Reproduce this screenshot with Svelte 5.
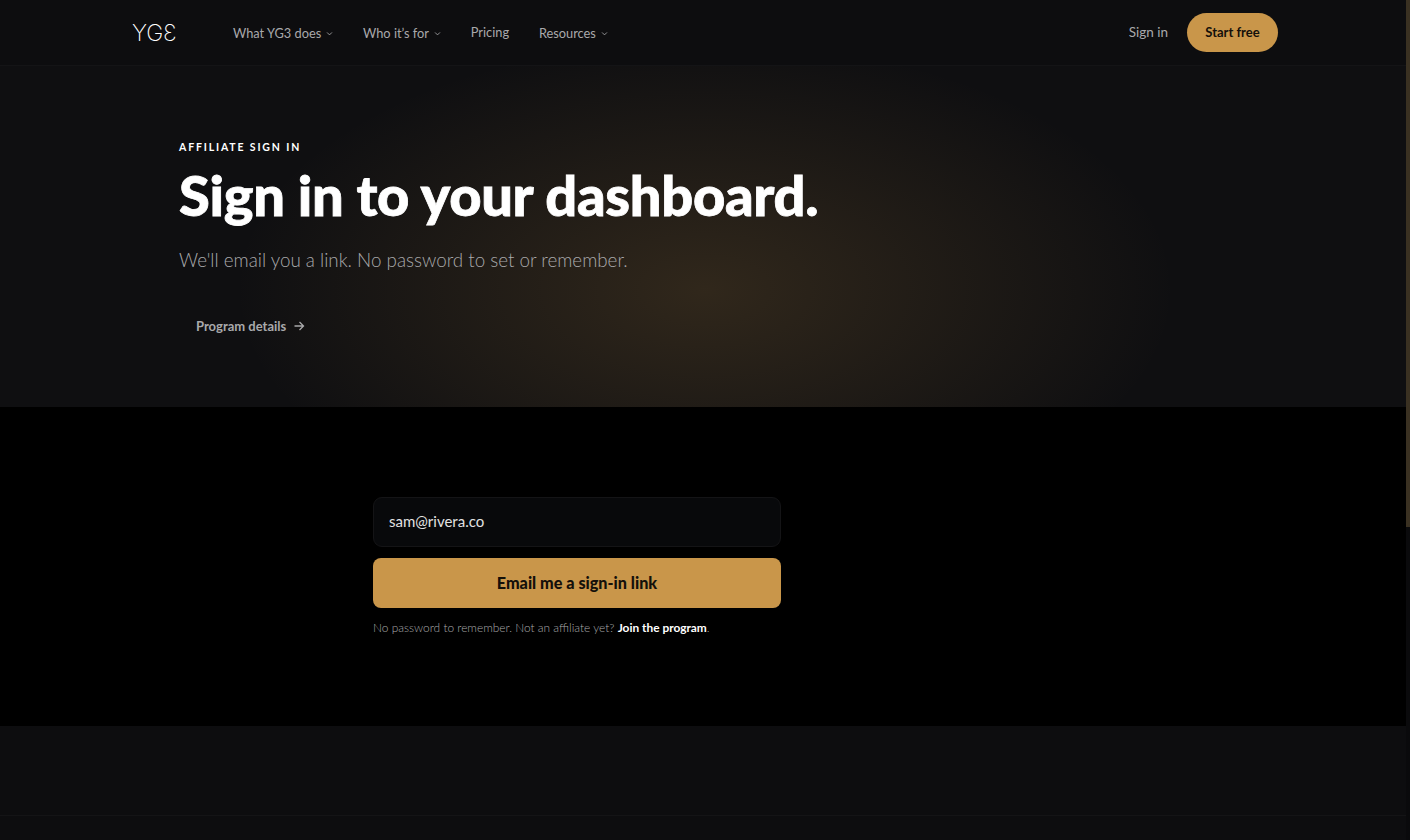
<script lang="ts">
	const navItems = [
		{ label: 'What YG3 does', menu: true },
		{ label: 'Who it’s for', menu: true },
		{ label: 'Pricing', menu: false },
		{ label: 'Resources', menu: true }
	];

	let email = $state('sam@rivera.co');
</script>

<div class="page">
	<header class="topbar">
		<div class="topbar-inner">
			<a class="logo" href="#home" aria-label="YG3 home">YG<span class="mirror">3</span></a>
			<nav class="links">
				{#each navItems as item}
					<a href="#nav" class:plain={!item.menu}>
						{item.label}
						{#if item.menu}
							<svg viewBox="0 0 10 10" width="7" height="7" aria-hidden="true">
								<path d="M1.5 3.5 5 7l3.5-3.5" />
							</svg>
						{/if}
					</a>
				{/each}
			</nav>
			<div class="actions">
				<a class="signin" href="#signin">Sign in</a>
				<a class="start" href="#start">Start free</a>
			</div>
		</div>
	</header>

	<section class="hero">
		<div class="hero-inner">
			<p class="eyebrow">AFFILIATE SIGN IN</p>
			<h1>Sign in to your dashboard.</h1>
			<p class="lede">We'll email you a link. No password to set or remember.</p>
			<a class="details" href="#program">
				Program details
				<svg viewBox="0 0 12 12" width="12" height="12" aria-hidden="true">
					<path d="M1.5 6h9M6.5 2l4 4-4 4" />
				</svg>
			</a>
		</div>
	</section>

	<main class="content">
		<form class="signin-form" onsubmit={(e) => e.preventDefault()}>
			<input type="email" bind:value={email} aria-label="Email" />
			<button type="submit">Email me a sign-in link</button>
			<p class="note">No password to remember. Not an affiliate yet? <a href="#join">Join the program</a>.</p>
		</form>
	</main>

	<footer class="footer">
		<div class="footer-rule"></div>
	</footer>

	<div class="scroll-track"><div class="scroll-thumb"></div></div>
</div>

<style>
	:global(body) {
		margin: 0;
		background: #000;
	}

	.page {
		position: relative;
		height: 840px;
		overflow: hidden;
		font-family: Lato, 'Liberation Sans', sans-serif;
		color: #fff;
		background: #000;
	}

	a {
		color: inherit;
		text-decoration: none;
	}

	.topbar {
		height: 65px;
		background: #0d0d0f;
		border-bottom: 1px solid #141416;
	}

	.topbar-inner {
		width: 1146px;
		height: 100%;
		margin: 0 auto;
		display: flex;
		align-items: center;
	}

	.logo {
		width: 101px;
		font-family: Inter, sans-serif;
		font-size: 23px;
		font-weight: 200;
		color: #fff;
	}

	.mirror {
		display: inline-block;
		transform: scaleX(-1);
	}

	.links {
		display: flex;
		align-items: center;
		gap: 29.8px;
		font-size: 12.8px;
		color: #a9a9ab;
	}

	.links a {
		display: flex;
		align-items: center;
		gap: 5px;
	}

	.links a.plain {
		margin-top: -2px;
	}

	.links svg {
		margin-top: 2px;
	}

	.links path {
		fill: none;
		stroke: currentColor;
		stroke-width: 1.2;
	}

	.actions {
		margin-left: auto;
		display: flex;
		align-items: center;
		gap: 19px;
	}

	.signin {
		padding-bottom: 2px;
		font-size: 13.5px;
		color: #a9a9ab;
	}

	.start {
		box-sizing: border-box;
		display: flex;
		align-items: center;
		justify-content: center;
		width: 91px;
		height: 39px;
		padding-bottom: 2px;
		border-radius: 20px;
		background: #c9964a;
		color: #14100a;
		font-size: 13px;
		font-weight: 700;
	}

	.hero {
		height: 341px;
		background:
			radial-gradient(ellipse 470px 250px at 705px 224px, rgba(201, 150, 74, 0.18), rgba(201, 150, 74, 0) 100%),
			#0f0f11;
	}

	.hero-inner {
		width: 1052px;
		margin: 0 auto;
		padding-top: 75px;
	}

	.eyebrow {
		margin: 0;
		font-size: 10.5px;
		line-height: 13px;
		font-weight: 700;
		letter-spacing: 1.85px;
	}

	h1 {
		margin: 9px 0 0;
		font-size: 56px;
		line-height: 64px;
		font-weight: 900;
		letter-spacing: -0.3px;
		-webkit-text-stroke: 0.8px #fff;
	}

	.lede {
		margin: 19px 0 0;
		font-size: 18.8px;
		line-height: 28px;
		font-weight: 300;
		color: #a9a9ab;
	}

	.details {
		display: inline-flex;
		align-items: center;
		gap: 7px;
		margin: 44px 0 0 17px;
		font-size: 13px;
		font-weight: 700;
		color: #a9a9ab;
	}

	.details path {
		fill: none;
		stroke: currentColor;
		stroke-width: 1.3;
	}

	.content {
		height: 319px;
		box-sizing: border-box;
		padding: 90px 0 0 373px;
		background: #000;
	}

	.signin-form {
		width: 408px;
		display: flex;
		flex-direction: column;
		gap: 11px;
	}

	input {
		box-sizing: border-box;
		height: 50px;
		padding: 0 15px 2px;
		background: #08090b;
		border: 1px solid #141416;
		border-radius: 9px;
		outline: none;
		font-family: inherit;
		font-size: 15px;
		color: #e2e2e2;
	}

	button {
		height: 50px;
		padding: 0 0 2px;
		border: 0;
		border-radius: 8px;
		background: #c9964a;
		font-family: inherit;
		font-size: 16.2px;
		font-weight: 900;
		color: #14100a;
	}

	.note {
		margin: 1px 0 0;
		font-size: 11.9px;
		line-height: 16px;
		font-weight: 300;
		color: #a9a9ab;
	}

	.note a {
		font-weight: 700;
		color: #fff;
	}

	.footer {
		height: 115px;
		background: #0d0d0f;
	}

	.footer-rule {
		height: 89px;
		border-bottom: 1px solid #141416;
	}

	.scroll-track {
		position: absolute;
		top: 0;
		right: 0;
		width: 4px;
		height: 100%;
		background: #0a0a0c;
	}

	.scroll-thumb {
		height: 527px;
		background: #3a3122;
	}
</style>
